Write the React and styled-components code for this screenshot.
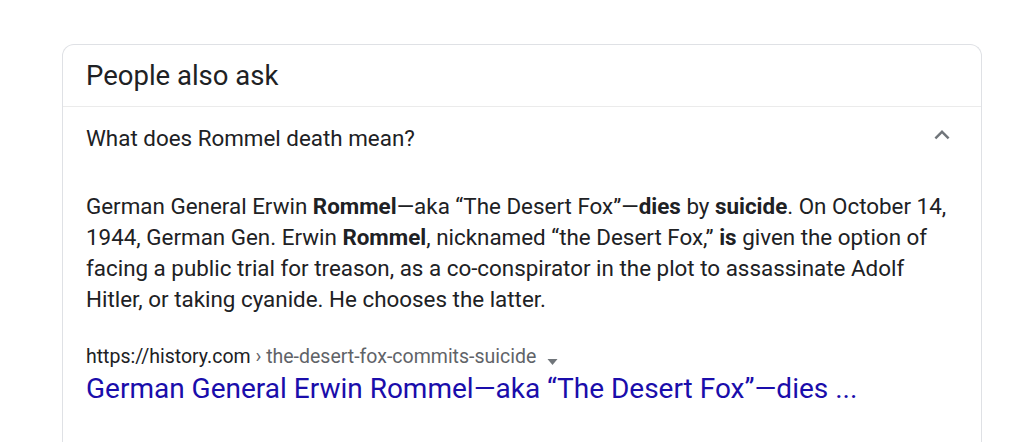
import React from "react"
import styled, { createGlobalStyle } from 'styled-components';

const GlobalStyle = createGlobalStyle`
  body {
    margin: 0;
    background: #fff;
    font-family: Roboto, "Liberation Sans", Arial, sans-serif;
    color: #202124;
  }
`;

const Page = () => {
  return (
    <>
      <GlobalStyle />
      <Card>
        <Header>People also ask</Header>

        <Question>
          <span>What does Rommel death mean?</span>
          <Chevron viewBox="0 0 24 24">
            <path d="M7.41 15.41L12 10.83l4.59 4.58L18 14l-6-6-6 6z" />
          </Chevron>
        </Question>

        <Answer>
          <Snippet>
            German General Erwin <b>Rommel</b>—aka “The Desert Fox”—<b>dies</b> by <b>suicide</b>. On October 14,
            1944, German Gen. Erwin <b>Rommel</b>, nicknamed “the Desert Fox,” <b>is</b> given the option of
            facing a public trial for treason, as a co-conspirator in the plot to assassinate Adolf
            Hitler, or taking cyanide. He chooses the latter.
          </Snippet>

          <Cite>
            https://history.com<Crumb> › the-desert-fox-commits-suicide</Crumb>
            <Caret viewBox="0 0 10 6">
              <path d="M0 0h10L5 6z" />
            </Caret>
          </Cite>
          <ResultLink href="#">
            German General Erwin Rommel—aka “The Desert Fox”—dies ...
          </ResultLink>
        </Answer>
      </Card>
    </>
  )
}

export default Page

const Card = styled.div`
  margin: 44px 0 0 62px;
  width: 920px;
  min-height: 420px;
  border: 1px solid #dfe1e5;
  border-bottom: none;
  border-radius: 12px 12px 0 0;
  box-sizing: border-box;
`;

const Header = styled.div`
  height: 61px;
  padding: 0 23px;
  display: flex;
  align-items: center;
  font-size: 27.5px;
  border-bottom: 1px solid #ebebeb;
`;

const Question = styled.div`
  height: 62px;
  padding: 0 24px 0 23px;
  display: flex;
  align-items: center;
  justify-content: space-between;
  font-size: 22.4px;
`;

const Chevron = styled.svg`
  width: 30px;
  height: 30px;
  fill: #70757a;
  margin-bottom: 7px;
`;

const Answer = styled.div`
  padding: 22px 24px 0 23px;
`;

const Snippet = styled.div`
  font-size: 22.4px;
  line-height: 31px;
  width: 880px;
  b { font-weight: 700; }
`;

const Cite = styled.div`
  margin-top: 29px;
  font-size: 19.5px;
  line-height: 26px;
  display: flex;
  align-items: center;
`;

const Crumb = styled.span`
  color: #5f6368;
  white-space: pre;
`;

const Caret = styled.svg`
  width: 11px;
  height: 6px;
  fill: #70757a;
  margin: 9px 0 0 11px;
`;

const ResultLink = styled.a`
  display: block;
  margin-top: 2px;
  font-size: 28px;
  line-height: 34px;
  color: #1a0dab;
  text-decoration: none;
`;
